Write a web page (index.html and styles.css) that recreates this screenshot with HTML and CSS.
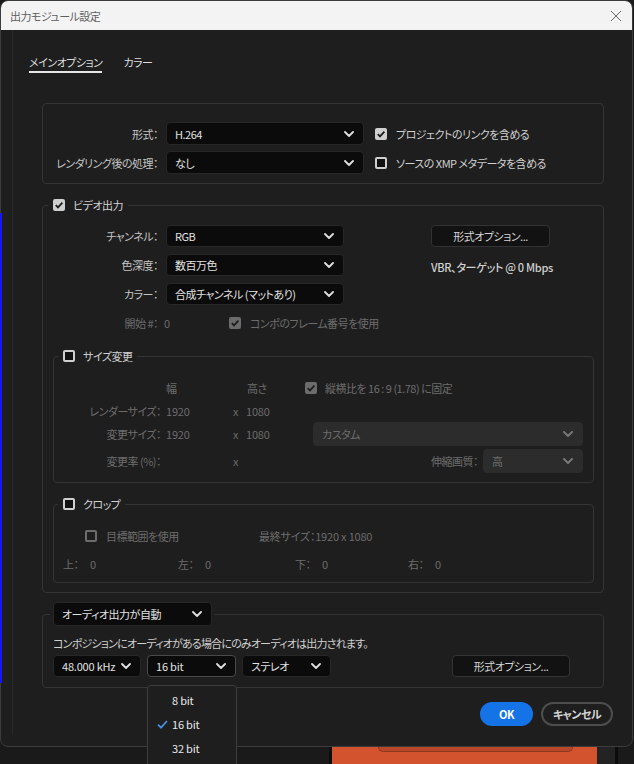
FILE: index.html
```html
<!DOCTYPE html>
<html lang="ja">
<head>
<meta charset="utf-8">
<title>出力モジュール設定</title>
<link rel="stylesheet" href="styles.css">
</head>
<body>
<div class="screen">
  <div class="dialog">
    <div class="titlebar">
      <span class="title">出力モジュール設定</span>
      <svg class="close" width="12" height="12" viewBox="0 0 12 12"><path d="M1 1L11 11M11 1L1 11" stroke="#6a6a6a" stroke-width="1" fill="none"/></svg>
    </div>
    <div class="content">
      <div class="tabs">
        <span class="tab active">メインオプション</span>
        <span class="tab">カラー</span>
      </div>

      <div class="panel">
        <div class="frow">
          <span class="lbl">形式：</span>
          <div class="select s-format"><span>H.264</span><svg class="chev" width="10" height="6" viewBox="0 0 10 6"><path d="M1 1L5 5L9 1" stroke="#e0e0e0" stroke-width="1.8" fill="none" stroke-linecap="round" stroke-linejoin="round"/></svg></div>
          <span class="cb on"><svg width="12" height="12" viewBox="0 0 12 12"><path d="M2.8 6.2L5 8.4L9.4 3.6" stroke="#1e1e1e" stroke-width="1.8" fill="none"/></svg></span>
          <span class="cbtext">プロジェクトのリンクを含める</span>
        </div>
        <div class="frow">
          <span class="lbl">レンダリング後の処理：</span>
          <div class="select s-format"><span>なし</span><svg class="chev" width="10" height="6" viewBox="0 0 10 6"><path d="M1 1L5 5L9 1" stroke="#e0e0e0" stroke-width="1.8" fill="none" stroke-linecap="round" stroke-linejoin="round"/></svg></div>
          <span class="cb off"></span>
          <span class="cbtext">ソースの XMP メタデータを含める</span>
        </div>
      </div>

      <fieldset class="group video">
        <legend class="legend"><span class="cb on"><svg width="12" height="12" viewBox="0 0 12 12"><path d="M2.8 6.2L5 8.4L9.4 3.6" stroke="#1e1e1e" stroke-width="1.8" fill="none"/></svg></span><span class="legend-text">ビデオ出力</span></legend>
        <div class="video-top">
          <div class="vcol">
            <div class="vrow">
              <span class="lbl">チャンネル：</span>
              <div class="select s-video"><span>RGB</span><svg class="chev" width="10" height="6" viewBox="0 0 10 6"><path d="M1 1L5 5L9 1" stroke="#e0e0e0" stroke-width="1.8" fill="none" stroke-linecap="round" stroke-linejoin="round"/></svg></div>
            </div>
            <div class="vrow">
              <span class="lbl">色深度：</span>
              <div class="select s-video"><span>数百万色</span><svg class="chev" width="10" height="6" viewBox="0 0 10 6"><path d="M1 1L5 5L9 1" stroke="#e0e0e0" stroke-width="1.8" fill="none" stroke-linecap="round" stroke-linejoin="round"/></svg></div>
            </div>
            <div class="vrow">
              <span class="lbl">カラー：</span>
              <div class="select s-video"><span>合成チャンネル (マットあり)</span><svg class="chev" width="10" height="6" viewBox="0 0 10 6"><path d="M1 1L5 5L9 1" stroke="#e0e0e0" stroke-width="1.8" fill="none" stroke-linecap="round" stroke-linejoin="round"/></svg></div>
            </div>
          </div>
          <div class="vright">
            <div class="btn fmt-btn">形式オプション...</div>
            <div class="bitrate">VBR、ターゲット @ 0 Mbps</div>
          </div>
        </div>
        <div class="startrow dim">
          <span class="lbl dimlbl">開始 #：</span>
          <span class="startval">0</span>
          <span class="cb on dis"><svg width="12" height="12" viewBox="0 0 12 12"><path d="M2.8 6.2L5 8.4L9.4 3.6" stroke="#1e1e1e" stroke-width="1.8" fill="none"/></svg></span>
          <span class="cbtext dim">コンポのフレーム番号を使用</span>
        </div>

        <fieldset class="group sub size">
          <legend class="legend sublegend"><span class="cb off"></span><span class="legend-text">サイズ変更</span></legend>
          <div class="srow s1 dim">
            <span class="sp112"></span>
            <span class="w81">幅</span>
            <span class="w58">高さ</span>
            <span class="cb on dis"><svg width="12" height="12" viewBox="0 0 12 12"><path d="M2.8 6.2L5 8.4L9.4 3.6" stroke="#1e1e1e" stroke-width="1.8" fill="none"/></svg></span>
            <span class="cbtext2">縦横比を 16 : 9 (1.78) に固定</span>
          </div>
          <div class="srow s2 dim">
            <span class="slbl">レンダーサイズ：</span>
            <span class="sval">1920</span>
            <span class="sx">x</span>
            <span class="sval">1080</span>
          </div>
          <div class="srow s3 dim">
            <span class="slbl">変更サイズ：</span>
            <span class="sval">1920</span>
            <span class="sx">x</span>
            <span class="sval">1080</span>
            <div class="select dis s-custom"><span>カスタム</span><svg class="chev" width="10" height="6" viewBox="0 0 10 6"><path d="M1 1L5 5L9 1" stroke="#7a7a7a" stroke-width="1.8" fill="none" stroke-linecap="round" stroke-linejoin="round"/></svg></div>
          </div>
          <div class="srow s3 dim">
            <span class="slbl">変更率 (%)：</span>
            <span class="sval"></span>
            <span class="sx">x</span>
            <span class="sval"></span>
            <span class="qlbl">伸縮画質：</span>
            <div class="select dis s-quality"><span>高</span><svg class="chev" width="10" height="6" viewBox="0 0 10 6"><path d="M1 1L5 5L9 1" stroke="#7a7a7a" stroke-width="1.8" fill="none" stroke-linecap="round" stroke-linejoin="round"/></svg></div>
          </div>
        </fieldset>

        <fieldset class="group sub crop">
          <legend class="legend sublegend"><span class="cb off"></span><span class="legend-text">クロップ</span></legend>
          <div class="crow c1 dim">
            <span class="roi"><span class="cb off dis"></span><span class="cbtext dim">目標範囲を使用</span></span>
            <span class="num">最終サイズ：1920 x 1080</span>
          </div>
          <div class="crow c2 dim">
            <span class="cc cc1"><span class="cl">上：</span><span>0</span></span>
            <span class="cc cc2"><span class="cl">左：</span><span>0</span></span>
            <span class="cc cc3"><span class="cl">下：</span><span>0</span></span>
            <span class="cc"><span class="cl">右：</span><span>0</span></span>
          </div>
        </fieldset>
      </fieldset>

      <fieldset class="group audio">
        <legend class="legend alegend">
          <div class="select s-audio"><span>オーディオ出力が自動</span><svg class="chev" width="10" height="6" viewBox="0 0 10 6"><path d="M1 1L5 5L9 1" stroke="#e0e0e0" stroke-width="1.8" fill="none" stroke-linecap="round" stroke-linejoin="round"/></svg></div>
        </legend>
        <div class="anote">コンポジションにオーディオがある場合にのみオーディオは出力されます。</div>
        <div class="arow">
          <div class="select s-rate"><span class="num">48.000 kHz</span><svg class="chev" width="10" height="6" viewBox="0 0 10 6"><path d="M1 1L5 5L9 1" stroke="#e0e0e0" stroke-width="1.8" fill="none" stroke-linecap="round" stroke-linejoin="round"/></svg></div>
          <div class="select s-bit open"><span class="num">16 bit</span><svg class="chev" width="10" height="6" viewBox="0 0 10 6"><path d="M1 1L5 5L9 1" stroke="#e0e0e0" stroke-width="1.8" fill="none" stroke-linecap="round" stroke-linejoin="round"/></svg></div>
          <div class="select s-bit"><span>ステレオ</span><svg class="chev" width="10" height="6" viewBox="0 0 10 6"><path d="M1 1L5 5L9 1" stroke="#e0e0e0" stroke-width="1.8" fill="none" stroke-linecap="round" stroke-linejoin="round"/></svg></div>
          <div class="btn afmt-btn">形式オプション...</div>
        </div>
      </fieldset>

      <div class="actions">
        <div class="pill ok">OK</div>
        <div class="pill cancel">キャンセル</div>
      </div>
    </div>
  </div>

  <div class="backdrop">
    <div class="bd-edge"></div>
    <div class="orange"><div class="orange-tab"></div></div>
    <div class="bd-gap"></div>
    <div class="bd-edge"></div>
  </div>

  <div class="blue-edge"></div>

  <div class="menu">
    <div class="mi"><span class="tick"></span><span class="num">8 bit</span></div>
    <div class="mi"><svg class="tick" width="11" height="9" viewBox="0 0 11 9"><path d="M1 4.6L4 7.6L10 1" stroke="#4a8fe0" stroke-width="1.8" fill="none"/></svg><span class="num">16 bit</span></div>
    <div class="mi"><span class="tick"></span><span class="num">32 bit</span></div>
  </div>
</div>
</body>
</html>
```

FILE: styles.css
```css
* { box-sizing: border-box; }
html, body { margin: 0; padding: 0; }
body {
  background: #1a1a1a;
  font-family: "Noto Sans CJK JP", "Noto Sans", sans-serif;
  font-size: 11px;
  letter-spacing: -0.5px;
  font-feature-settings: "palt";
  color: #c8c8c8;
}
.num { letter-spacing: -0.2px; }
.screen {
  position: relative;
  width: 634px;
  height: 764px;
  overflow: hidden;
}
.dialog {
  width: 633px;
  height: 747px;
  border: 1px solid #3c3c3c;
  border-radius: 8px;
  background: #1e1e1e;
  overflow: hidden;
  display: flex;
  flex-direction: column;
}
.titlebar {
  height: 29px;
  flex: none;
  background: #f3f3f3;
  display: flex;
  align-items: center;
  justify-content: space-between;
  padding: 0 10px 0 9px;
}
.title { color: #5e5e5e; }

.content {
  flex: 1;
  margin-left: 11px;
  margin-bottom: 11px;
  border-left: 1px solid #292929;
  padding: 0 28px 0 29px;
}
.tabs {
  display: flex;
  gap: 21px;
  margin: 23px 0 0 -13px;
}
.tab {
  line-height: 18px;
  border-bottom: 2px solid transparent;
  color: #dcdcdc;
}
.tab.active { border-bottom-color: #e6e6e6; }

.panel {
  margin-top: 30px;
  border: 1px solid #343434;
  border-radius: 4px;
  padding: 18px 0 9px 0;
  display: flex;
  flex-direction: column;
  gap: 6px;
}
.frow { display: flex; align-items: center; height: 23px; }
.lbl {
  width: 120px;
  flex: none;
  text-align: right;
  padding-right: 5px;
  color: #c4c4c4;
  white-space: nowrap;
}
.select {
  flex: none;
  display: flex;
  align-items: center;
  justify-content: space-between;
  background: #0b0b0b;
  border: 1px solid #272727;
  border-radius: 4px;
  padding: 0 9px 0 8px;
  color: #e2e2e2;
  white-space: nowrap;
}
.select.dis { background: #2c2c2c; border-color: #2c2c2c; color: #6c6c6c; }
.select.open { border-color: #4a4a4a; }
.s-format { width: 198px; height: 23px; margin-left: 3px; }
.cb {
  flex: none;
  width: 12px;
  height: 12px;
  border-radius: 2px;
  display: inline-flex;
}
.cb.on { background: #cfcfcf; }
.cb.off { border: 2px solid #cfcfcf; background: #101010; }
.cb.on.dis { background: #6c6c6c; }
.cb.off.dis { border-color: #6c6c6c; background: #1e1e1e; }
.frow .cb { margin-left: 11px; }
.cbtext { margin-left: 9px; color: #d0d0d0; white-space: nowrap; }
.cbtext.dim { color: #6c6c6c; }

.group {
  margin: 0;
  padding: 0;
  border: 1px solid #343434;
  border-radius: 4px;
  min-width: 0;
}
.legend {
  display: flex;
  align-items: center;
  height: 14px;
  padding: 0 5px;
  margin-left: 5px;
}
.legend-text { margin-left: 8px; color: #d2d2d2; line-height: 14px; }
.video { margin-top: 14px; padding-bottom: 9px; }
.video-top { display: flex; padding-top: 13px; }
.vcol { display: flex; flex-direction: column; gap: 7px; }
.vrow { display: flex; align-items: center; height: 22px; }
.s-video { width: 178px; height: 22px; margin-left: 3px; }
.vright { margin-left: 87px; }
.btn {
  display: flex;
  align-items: center;
  justify-content: center;
  background: #121212;
  border: 1px solid #333;
  border-radius: 4px;
  color: #d4d4d4;
}
.fmt-btn { width: 119px; height: 22px; }
.bitrate { margin-top: 12px; line-height: 16px; color: #d0d0d0; font-weight: 500; white-space: nowrap; letter-spacing: -0.3px; }
.startrow { display: flex; align-items: center; height: 16px; margin-top: 10px; }
.dim { color: #6c6c6c; }
.dimlbl { color: #6c6c6c; }
.startval { width: 66px; padding-left: 1px; }
.startrow .cbtext { margin-left: 9px; }

.sub { margin: 18px 9px 0 10px; }
.sublegend { margin-left: 4px; }
.srow { display: flex; align-items: center; white-space: nowrap; }
.s1 { height: 16px; margin-top: 17px; }
.s2 { height: 16px; margin-top: 7px; }
.s3 { height: 24px; margin-top: 3px; }
.size { padding-bottom: 9px; }
.sp112 { width: 112px; }
.w81 { width: 81px; }
.w58 { width: 58px; }
.cbtext2 { margin-left: 8px; }
.slbl { width: 112px; text-align: right; padding-right: 5px; }
.sval { width: 67px; letter-spacing: -0.2px; }
.sx { width: 13px; }
.s-custom { width: 270px; height: 24px; }
.qlbl { width: 170px; text-align: right; padding-right: 5px; }
.s-quality { width: 100px; height: 24px; }

.crop { margin-top: 14px; padding-bottom: 10px; }
.crow { display: flex; align-items: center; height: 16px; white-space: nowrap; }
.c1 { margin-top: 17px; }
.c2 { margin-top: 12px; }
.roi { display: flex; align-items: center; width: 205px; padding-left: 31px; }
.cc { display: flex; }
.cc1 { width: 124px; padding-left: 9px; }
.cc2 { width: 117px; }
.cc3 { width: 113px; }
.cl { width: 27px; }

.audio { margin-top: 9px; padding: 0 0 10px 0; }
.alegend { height: 24px; padding: 0 3px; margin-left: 7px; }
.s-audio { width: 159px; height: 24px; }
.anote { margin: 9px 0 0 10px; line-height: 16px; color: #d0d0d0; white-space: nowrap; letter-spacing: -0.8px; }
.arow { display: flex; gap: 6px; margin: 4px 0 0 10px; }
.s-rate { width: 88px; height: 22px; }
.s-bit { width: 89px; height: 22px; }
.afmt-btn { width: 118px; height: 22px; margin-left: 115px; }

.actions {
  display: flex;
  justify-content: flex-end;
  gap: 8px;
  margin: 14px -9px 0 0;
}
.pill {
  height: 24px;
  border-radius: 12px;
  display: flex;
  align-items: center;
  justify-content: center;
  font-weight: 700;
}
.ok { width: 53px; background: #1473e6; color: #fff; }
.cancel { width: 72px; border: 2px solid #4d4d4d; color: #d4d4d4; }

.backdrop { display: flex; height: 17px; }
.backdrop > .bd-edge:first-child { margin-left: 329px; }
.bd-edge { width: 3px; background: #0c0c0c; }
.orange { width: 265px; background: #d4532f; padding-left: 46px; }
.orange-tab {
  width: 195px;
  height: 5px;
  background: #bb4729;
  border: 1px solid #8e3720;
  border-top: none;
  border-radius: 0 0 6px 6px;
}
.bd-gap { width: 18px; background: #232323; }

.blue-edge {
  position: absolute;
  left: 0;
  top: 213px;
  width: 2px;
  height: 470px;
  background: #1414ff;
}

.menu {
  position: absolute;
  left: 147px;
  top: 685px;
  width: 90px;
  height: 90px;
  background: #1e1e1e;
  border: 1px solid #3d3d3d;
  border-radius: 4px;
  padding-top: 2px;
}
.mi {
  height: 24px;
  display: flex;
  align-items: center;
  padding-left: 9px;
  color: #e8e8e8;
}
.tick { width: 11px; margin-right: 4px; flex: none; }
```
